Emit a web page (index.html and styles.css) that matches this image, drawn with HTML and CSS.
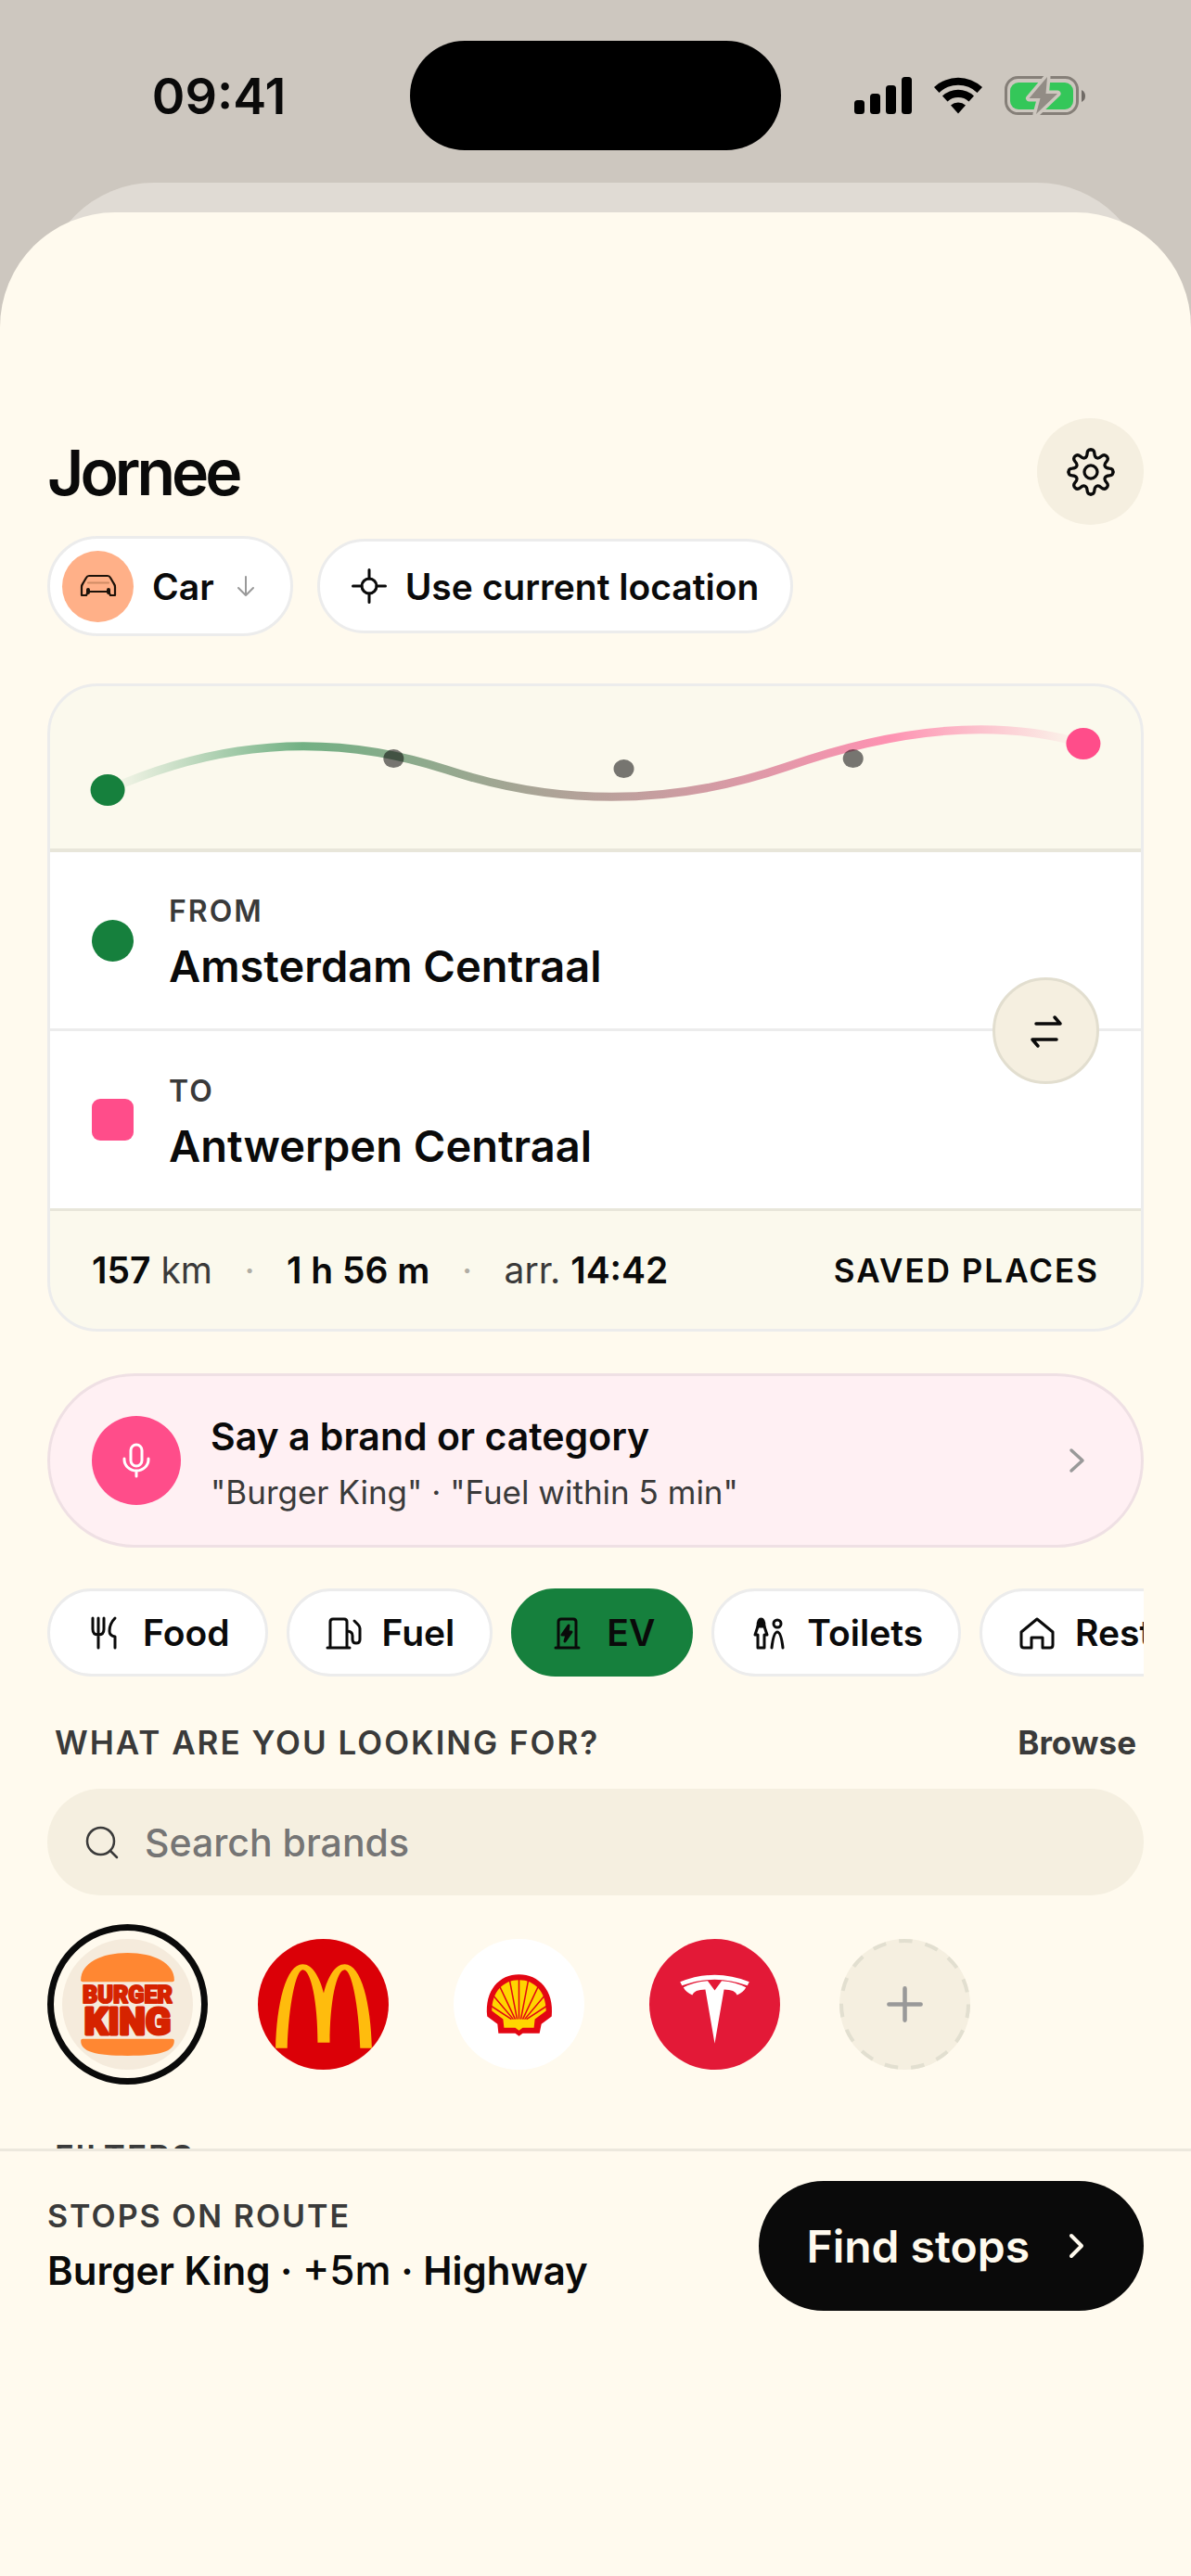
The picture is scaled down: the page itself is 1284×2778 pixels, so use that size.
FILE: index.html
```html
<!DOCTYPE html>
<html lang="en">
<head>
  <meta charset="UTF-8">
  <meta name="viewport" content="width=device-width, initial-scale=1.0">
  <title>Jornee</title>
  <link rel="stylesheet" href="styles.css">
</head>
<body>
  <div class="status-bar">
    <span class="time">09:41</span>
    <span class="island"></span>
    <span class="status-icons">
      <svg width="62" height="40" viewBox="0 0 62 40">
        <rect x="0" y="25" width="11" height="15" rx="3.5"/>
        <rect x="17" y="18" width="11" height="22" rx="3.5"/>
        <rect x="34" y="9" width="11" height="31" rx="3.5"/>
        <rect x="51" y="0" width="11" height="40" rx="3.5"/>
      </svg>
      <svg width="54" height="40" viewBox="0 0 54 40">
        <path d="M1 11 A38 38 0 0 1 53 11 L47.5 17 A29.5 29.5 0 0 0 6.5 17 Z"/>
        <path d="M10 20.5 A25 25 0 0 1 44 20.5 L38.5 26.5 A17 17 0 0 0 15.500 26.500 Z"/>
        <path d="M19 30.500 A12 12 0 0 1 35 30.500 L27 39.500 Z"/>
      </svg>
      <svg width="88" height="44" viewBox="0 0 88 44">
        <rect x="1.5" y="2.5" width="77" height="39" rx="13" fill="none" stroke="#857f78" stroke-width="3"/>
        <path d="M83 16 Q87 18 87 22.500 Q87 27 83 29 Z" fill="#706b66"/>
        <rect x="6" y="8" width="68" height="29" rx="9" fill="#34c759"/>
        <path d="M46 2 L26.500 25 H38.500 L34 42 L57 20 H44.500 Z" fill="#928c85" stroke="#cdc7bf" stroke-width="7" stroke-linejoin="round" paint-order="stroke"/>
      </svg>
    </span>
  </div>

  <div class="sheet">
    <main class="content">
      <header class="header">
        <h1>Jornee</h1>
        <button type="button" class="settings" aria-label="Settings">
          <svg width="54" height="54" viewBox="-30 -30 60 60" fill="none" stroke="#0a0a0a" stroke-width="3.6" stroke-linecap="round">
            <g id="cog"><path d="M26.7 0 Q26.7 4.2 22.3 4.3 Q17.9 4.5 16.9 7 Q15.9 9.5 18.9 12.7 Q21.8 15.9 18.9 18.9 Q15.9 21.8 12.7 18.9 Q9.5 15.9 7 16.9 Q4.5 17.9 4.3 22.3 Q4.2 26.7 0 26.7"/></g>
            <use href="#cog" transform="rotate(90)"/>
            <use href="#cog" transform="rotate(180)"/>
            <use href="#cog" transform="rotate(270)"/>
            <circle r="7.8"/>
          </svg>
        </button>
      </header>

      <div class="pills">
        <button type="button" class="pill vehicle">
          <span class="vehicle-icon">
            <svg width="40" height="26" viewBox="0 0 40 26" fill="none" stroke="#1c1209" stroke-width="2.2" stroke-linejoin="round" stroke-linecap="round">
              <path d="M2 23 V14 Q2 12 3.500 10 L7 4 Q8 2 10 2 H30 Q32 2 33 4 L36.500 10 Q38 12 38 14 V23 H33 L31 19 H9 L7 23 Z"/>
              <path d="M9 9.5 H31" stroke="#d08b65"/>
              <path d="M9 17 V20 M31 17 V20" stroke-width="4"/>
            </svg>
          </span>
          Car
          <svg width="24" height="24" viewBox="-4 0 24 24" fill="none" stroke="#999" stroke-width="2" stroke-linecap="round" stroke-linejoin="round"><path d="M10 2 V22 M2 14 L10 22 L18 14"/></svg>
        </button>
        <button type="button" class="pill">
          <svg width="38" height="38" viewBox="0 0 38 38" fill="none" stroke="#0a0a0a" stroke-width="3" stroke-linecap="round"><circle cx="19" cy="19" r="8"/><path d="M19 1.5 V11 M19 27 V36.5 M1.5 19 H11 M27 19 H36.5"/></svg>
          Use current location
        </button>
      </div>

      <section class="route">
        <svg class="route-line" viewBox="0 0 1175 175" fill="none">
          <defs>
            <linearGradient id="trip" gradientUnits="userSpaceOnUse" x1="61" y1="0" x2="1113" y2="0">
              <stop offset="0" stop-color="#16803d" stop-opacity="0"/>
              <stop offset="0.2" stop-color="#16803d" stop-opacity="0.6"/>
              <stop offset="0.8" stop-color="#ff4d8a" stop-opacity="0.6"/>
              <stop offset="1" stop-color="#ff4d8a" stop-opacity="0"/>
            </linearGradient>
          </defs>
          <path d="M62 112 Q245 30 427 90 Q609 150 793 87 Q977 22 1113 62" stroke="url(#trip)" stroke-width="9"/>
          <g fill="#0a0a0a" fill-opacity="0.55">
            <ellipse cx="370" cy="78" rx="11" ry="10"/>
            <ellipse cx="618" cy="89" rx="11" ry="10"/>
            <ellipse cx="865" cy="78" rx="11" ry="10"/>
          </g>
          <ellipse cx="62" cy="112" rx="18.5" ry="17" fill="#16803d"/>
          <ellipse cx="1113" cy="62" rx="18.5" ry="17" fill="#ff4d8a"/>
        </svg>
        <div class="stops">
          <div class="stop">
            <span class="marker from"></span>
            <div>
              <div class="stop-label">FROM</div>
              <div class="stop-name">Amsterdam Centraal</div>
            </div>
          </div>
          <div class="stop">
            <span class="marker to"></span>
            <div>
              <div class="stop-label">TO</div>
              <div class="stop-name">Antwerpen Centraal</div>
            </div>
          </div>
          <button type="button" class="swap" aria-label="Swap from and to">
            <svg width="38" height="38" viewBox="0 0 38 38" fill="none" stroke="#0a0a0a" stroke-width="3.5" stroke-linecap="round" stroke-linejoin="round"><path d="M8 11 H34 L28 4 M30 28 H4 L10 35"/></svg>
          </button>
        </div>
        <div class="summary">
          <span><b>157</b> km</span>
          <span class="dot">·</span>
          <b>1 h 56 m</b>
          <span class="dot">·</span>
          <span>arr. <b>14:42</b></span>
          <a href="#saved" class="saved">SAVED PLACES</a>
        </div>
      </section>

      <button type="button" class="voice">
        <span class="mic">
          <svg width="34" height="40" viewBox="0 0 34 40" fill="none" stroke="#fff" stroke-width="3" stroke-linecap="round"><rect x="11" y="3" width="12" height="23" rx="6"/><path d="M4 18 V19 A13 12 0 0 0 30 19 V18 M17 31 V37"/></svg>
        </span>
        <span class="voice-text">
          <strong>Say a brand or category</strong>
          <small>"Burger King" · "Fuel within 5 min"</small>
        </span>
        <svg width="18" height="28" viewBox="0 0 18 28" fill="none" stroke="#999" stroke-width="3.5" stroke-linecap="round" stroke-linejoin="round"><path d="M3 3 L15 14 L3 25"/></svg>
      </button>

      <div class="chips">
        <button type="button" class="chip">
          <svg viewBox="0 0 42 42"><path d="M8 5 V17 Q8 23 14 23 Q20 23 20 17 V5 M14 5 V37 M32 5 Q26 11 26 19 Q26 24 32 25 V37"/></svg>
          Food
        </button>
        <button type="button" class="chip">
          <svg viewBox="0 0 42 42"><path d="M6 37 V9 Q6 6 9 6 H21 Q24 6 24 9 V37 M3 37 H27 M24 19 Q30 19 30 24 V28 Q30 32 34 32 Q38 32 38 28 V16 Q38 14 36 12 L32 8"/></svg>
          Fuel
        </button>
        <button type="button" class="chip active">
          <svg viewBox="0 0 42 42"><path d="M10 37 V9 Q10 6 13 6 H26 Q29 6 29 9 V37 M7 37 H32"/><path d="M21 13 L14 23 H19 L17 30 L24 20 H20 Z" fill="currentColor"/></svg>
          EV
        </button>
        <button type="button" class="chip">
          <svg viewBox="0 0 42 42"><path d="M9 14 Q9 6 12.500 6 Q16 6 16 14 Z" fill="currentColor"/><path d="M9 14 L6 23 H9 V37 H16 V23 H19 L16 14 M24 37 Q26 20 30 20 Q34 20 36 37"/><circle cx="30" cy="11" r="4"/></svg>
          Toilets
        </button>
        <button type="button" class="chip">
          <svg viewBox="0 0 42 42"><path d="M4 20 L21 6 L38 20 V34 Q38 37 35 37 H27 V26 H15 V37 H7 Q4 37 4 34 Z"/></svg>
          Rest
        </button>
      </div>

      <div class="section-head">
        <label for="brand-search">WHAT ARE YOU LOOKING FOR?</label>
        <a href="#browse">Browse</a>
      </div>
      <div class="search">
        <svg width="36" height="36" viewBox="0 0 36 36" fill="none" stroke="#3a3a3a" stroke-width="2.5" stroke-linecap="round"><circle cx="16.5" cy="16.5" r="14.5"/><path d="M27 27 L34 34"/></svg>
        <input type="search" id="brand-search" placeholder="Search brands">
      </div>

      <div class="brands">
        <button type="button" class="brand selected" aria-label="Burger King">
          <svg viewBox="0 0 140 140">
            <circle cx="70" cy="70" r="70" fill="#f5ebdc"/>
            <path d="M20 44 C20 26 42 15 70 15 C98 15 120 26 120 44 Q120 46 118 46 H22 Q20 46 20 44 Z" fill="#ff8732"/>
            <path d="M22 107 H118 Q120 107 120 109 C120 121 104 125 70 125 C36 125 20 121 20 109 Q20 107 22 107 Z" fill="#ff8732"/>
            <text class="bk-top" x="70" y="69">BURGER</text>
            <text class="bk-bottom" x="70" y="102">KING</text>
          </svg>
        </button>
        <button type="button" class="brand" aria-label="McDonald's">
          <svg viewBox="0 0 140 140">
            <circle cx="70" cy="70" r="70" fill="#db0007"/>
            <path d="M19 117 C20 70 30 27 48 27 C58 27 66 40 70.5 58 C75 40 83 27 93 27 C111 27 121 70 122 117 H109.500 C108 70 100 33 93 33 C84 33 77 68 77 111 H64 C64 68 57 33 48 33 C41 33 33 70 31.500 117 Z" fill="#ffbc0d"/>
          </svg>
        </button>
        <button type="button" class="brand" aria-label="Shell">
          <svg viewBox="0 0 140 140">
            <circle cx="70" cy="70" r="70" fill="#fff"/>
            <path d="M48 101 L47 91 L36 83 C33 55 49 38 70 38 C91 38 108 55 105 83 L94 91 L92 101 H74 L70 104 L66 101 Z" fill="#e30613"/>
            <path d="M54 95 L53 86 L41 77 C41 57 53 44 70 44 C87 44 99 57 99 77 L87 86 L86 95 H74 L70 98 L66 95 Z" fill="#ffd500"/>
            <path d="M70 86 V43 M68 86 L60 44 M72 86 L80 44 M66 86 L49 50 M74 86 L91 50 M64 86 L42 60 M76 86 L98 60 M62 86 L39 71 M78 86 L101 71" stroke="#e30613" stroke-width="1.5"/>
          </svg>
        </button>
        <button type="button" class="brand" aria-label="Tesla">
          <svg viewBox="0 0 140 140">
            <circle cx="70" cy="70" r="70" fill="#e31937"/>
            <path d="M33 46 Q70 31 107 46 L105 50 Q70 37 35 50 Z M36.500 52 Q48 46 62.500 45 L70 55 L77.500 45 Q92 46 103.500 52 Q101 57 94 60 Q92 54 80 54 L70 112 L60 54 Q48 54 46 60 Q39 57 36.500 52 Z" fill="#fff"/>
          </svg>
        </button>
        <button type="button" class="brand add" aria-label="Add brand">
          <svg viewBox="0 0 140 140" fill="none">
            <circle cx="70" cy="70" r="70" fill="#f5efe0"/>
            <circle cx="70" cy="70" r="68" stroke="#e2dfd0" stroke-width="4" stroke-dasharray="14.5 14"/>
            <path d="M70 53 V87 M53 70 H87" stroke="#999" stroke-width="4.5" stroke-linecap="round"/>
          </svg>
        </button>
      </div>

      <h2 class="filters">FILTERS</h2>
    </main>

    <footer class="bottom-bar">
      <div class="selection">
        <div class="selection-label">STOPS ON ROUTE</div>
        <div class="selection-value">Burger King · <span>+5m</span> · Highway</div>
      </div>
      <button type="button" class="find">
        Find stops
        <svg width="18" height="28" viewBox="0 0 18 28" fill="none" stroke="#fffaee" stroke-width="4" stroke-linecap="round" stroke-linejoin="round"><path d="M3 3 L14 14 L3 25"/></svg>
      </button>
    </footer>
  </div>
</body>
</html>
```
FILE: styles.css
```css
* {
  box-sizing: border-box;
}

body {
  margin: 0;
  height: 100vh;
  display: flex;
  flex-direction: column;
  background-color: #cdc7bf;
  color: #0a0a0a;
  font-family: Inter, "Liberation Sans", sans-serif;
  font-size: 39px;
  overflow: hidden;
}

button {
  margin: 0;
  padding: 0;
  border: none;
  background: none;
  color: inherit;
  font: inherit;
  cursor: pointer;
}

a {
  color: inherit;
  text-decoration: none;
}

svg {
  display: block;
  flex-shrink: 0;
}

/* Status bar */
.status-bar {
  display: grid;
  grid-template-columns: 1fr 400px 1fr;
  align-items: center;
  padding: 44px 0 67px;
  flex-shrink: 0;
}

.time {
  padding-left: 30px;
  text-align: center;
  font-size: 54px;
  font-weight: 600;
}

.island {
  height: 118px;
  border-radius: 59px;
  background-color: #000;
}

.status-icons {
  display: flex;
  align-items: center;
  gap: 23px;
  padding-left: 79px;
}

/* Sheet with the card behind it */
.sheet {
  position: relative;
  flex: 1;
  min-height: 0;
  display: flex;
  flex-direction: column;
  border-radius: 124px 124px 0 0;
  background-color: #fffaee;
}

.sheet::before {
  content: "";
  position: absolute;
  z-index: -1;
  top: -32px;
  left: 46px;
  right: 46px;
  height: 160px;
  border-radius: 120px 120px 0 0;
  background-color: #e0dbd4;
}

.content {
  flex: 1;
  min-height: 0;
  overflow: hidden;
  padding: 222px 51px 0;
}

.header {
  display: flex;
  justify-content: space-between;
  align-items: center;
}

h1 {
  margin: 0;
  font-size: 68px;
  font-weight: 600;
  letter-spacing: -4px;
}

.settings {
  width: 115px;
  height: 115px;
  display: grid;
  place-items: center;
  border-radius: 50%;
  background-color: #f5efe0;
}

/* Vehicle and location */
.pills {
  display: flex;
  align-items: center;
  gap: 26px;
  margin-top: 12px;
}

.pill {
  display: flex;
  align-items: center;
  gap: 20px;
  height: 102px;
  padding: 0 34px;
  border: 3px solid #ececec;
  border-radius: 54px;
  background-color: #fff;
  font-weight: 600;
}

.vehicle {
  height: 108px;
  padding: 0 38px 0 13px;
}

.vehicle-icon {
  width: 77px;
  height: 77px;
  display: grid;
  place-items: center;
  border-radius: 50%;
  background-color: #ffb088;
}

/* Route card */
.route {
  margin-top: 51px;
  border: 3px solid #ececec;
  border-radius: 54px;
  background-color: #fbf9ed;
  overflow: hidden;
}

.route-line {
  width: 100%;
  height: auto;
}

.stops {
  position: relative;
  background-color: #fff;
  border-top: 4px solid #e8e6da;
  border-bottom: 3px solid #e8e6da;
}

.stop {
  display: flex;
  align-items: center;
  gap: 38px;
  height: 190px;
  padding: 0 45px;
}

.stop + .stop {
  height: 194px;
  border-top: 3px solid #ececec;
}

.marker {
  width: 45px;
  height: 45px;
  background-color: #16803d;
  border-radius: 50%;
}

.marker.to {
  background-color: #ff4d8a;
  border-radius: 9px;
}

.stop-label {
  margin-bottom: 6px;
  color: #3a3a3a;
  font-size: 32px;
  font-weight: 600;
  line-height: 50px;
  letter-spacing: 2px;
}

.stop-name {
  font-size: 47px;
  font-weight: 600;
  line-height: 56px;
}

.swap {
  position: absolute;
  top: 50%;
  right: 45px;
  width: 115px;
  height: 115px;
  margin-top: -57px;
  display: grid;
  place-items: center;
  border: 3px solid #e2decf;
  border-radius: 50%;
  background-color: #f5efe0;
}

.summary {
  display: flex;
  align-items: center;
  height: 127px;
  padding: 0 45px;
  color: #3a3a3a;
}

.summary b {
  color: #0a0a0a;
  font-weight: 600;
}

.summary .dot {
  width: 80px;
  color: #b0ada4;
  text-align: center;
}

.saved {
  margin-left: auto;
  color: #0a0a0a;
  font-size: 35px;
  font-weight: 600;
  letter-spacing: 2px;
}

/* Voice search */
.voice {
  width: 100%;
  height: 188px;
  display: flex;
  align-items: center;
  gap: 32px;
  margin-top: 45px;
  padding: 0 60px 0 45px;
  border: 3px solid #efe0e4;
  border-radius: 94px;
  background-color: #fff0f3;
  text-align: left;
}

.mic {
  width: 96px;
  height: 96px;
  display: grid;
  place-items: center;
  border-radius: 50%;
  background-color: #ff4d8a;
}

.voice-text {
  flex: 1;
  padding-top: 8px;
}

.voice-text strong,
.voice-text small {
  display: block;
  line-height: 60px;
}

.voice-text strong {
  font-size: 41px;
  font-weight: 600;
}

.voice-text small {
  color: #3a3a3a;
  font-size: 35px;
}

/* Category chips */
.chips {
  display: flex;
  gap: 20px;
  margin-top: 44px;
  overflow: hidden;
}

.chip {
  display: flex;
  align-items: center;
  gap: 20px;
  flex-shrink: 0;
  height: 95px;
  padding: 0 38px;
  border: 3px solid #ececec;
  border-radius: 48px;
  background-color: #fff;
  font-weight: 600;
}

.chip svg {
  width: 42px;
  height: 42px;
  fill: none;
  stroke: currentColor;
  stroke-width: 3;
  stroke-linecap: round;
  stroke-linejoin: round;
}

.chip.active {
  border-color: #16803d;
  background-color: #16803d;
}

/* Brand search */
.section-head {
  display: flex;
  justify-content: space-between;
  margin-top: 49px;
  padding: 0 8px;
  color: #3a3a3a;
  font-size: 35px;
  font-weight: 600;
  line-height: 44px;
}

.section-head label {
  letter-spacing: 2px;
}

.section-head a {
  font-weight: 700;
}

.search {
  display: flex;
  align-items: center;
  gap: 28px;
  height: 115px;
  margin-top: 28px;
  padding: 0 41px;
  border-radius: 58px;
  background-color: #f5efe0;
}

.search input {
  flex: 1;
  min-width: 0;
  padding: 0;
  border: none;
  outline: none;
  background: none;
  color: #0a0a0a;
  font: inherit;
  font-size: 41px;
  font-weight: 500;
}

.search input::placeholder {
  color: #757575;
}

.brands {
  display: flex;
  gap: 38px;
  margin-top: 31px;
}

.brand {
  width: 173px;
  height: 173px;
  display: grid;
  place-items: center;
  border: 7px solid transparent;
  border-radius: 50%;
}

.brand svg {
  width: 141px;
  height: 141px;
}

.brand.selected {
  border-color: #0a0a0a;
}

.brand.add {
  width: 160px;
}

.bk-top,
.bk-bottom {
  fill: #d62300;
  stroke: #d62300;
  stroke-width: 2;
  stroke-linejoin: round;
  font-family: Roboto, sans-serif;
  font-size: 25px;
  font-weight: 900;
  text-anchor: middle;
}

.bk-bottom {
  font-size: 40px;
  stroke-width: 3;
}

.filters {
  margin: 56px 8px 0;
  color: #3a3a3a;
  font-size: 35px;
  font-weight: 600;
  line-height: 44px;
  letter-spacing: 2px;
}

/* Bottom bar */
.bottom-bar {
  display: flex;
  justify-content: space-between;
  align-items: center;
  flex-shrink: 0;
  padding: 32px 51px 286px;
  border-top: 3px solid #ece8dd;
}

.selection {
  padding-bottom: 6px;
}

.selection-label {
  color: #3a3a3a;
  font-size: 34px;
  font-weight: 600;
  line-height: 58px;
  letter-spacing: 2px;
}

.selection-value {
  font-size: 42px;
  font-weight: 600;
  line-height: 58px;
}

.selection-value span {
  font-size: 44px;
  font-weight: 500;
}

.find {
  display: flex;
  align-items: center;
  gap: 42px;
  height: 140px;
  padding: 0 63px 0 51px;
  border-radius: 70px;
  background-color: #0a0a0a;
  color: #fffaee;
  font-size: 48px;
  font-weight: 600;
}
```
